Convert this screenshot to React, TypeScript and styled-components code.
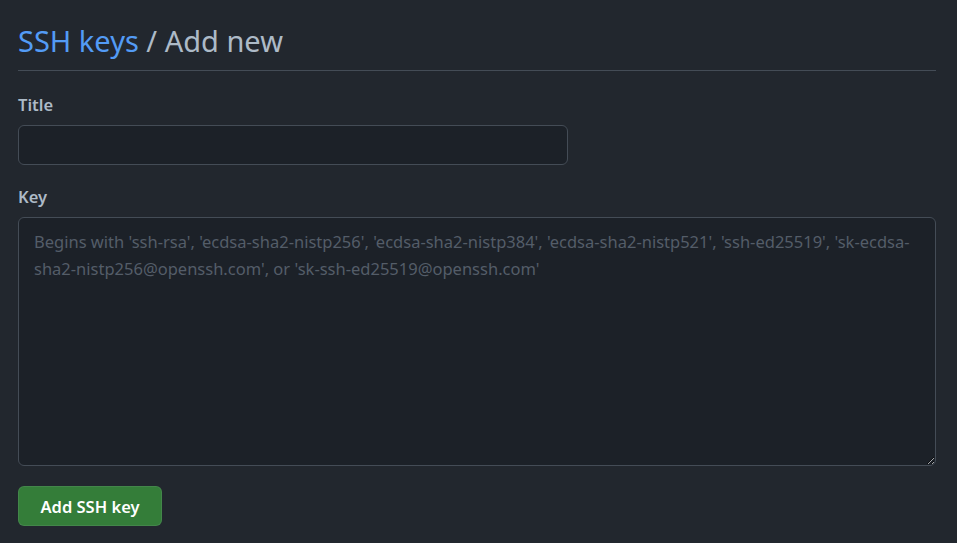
import React from 'react'
import styled, { createGlobalStyle } from 'styled-components'

const GlobalStyle = createGlobalStyle`
    html, body {
        margin:0;
        padding:0;
        background:#22272e;
    }
    body {
        font-family: "Noto Sans", "Open Sans", "Liberation Sans", sans-serif;
        color:#adbac7;
    }
`

const Page = styled.div`
    padding:12px 21px 18px 18px;
    min-height:543px;
    box-sizing:border-box;
    background:#22272e;
`

const Subhead = styled.div`
    display:flex;
    align-items:center;
    height:58px;
    border-bottom:1px solid #444c56;
    margin-bottom:22px;
`

const Heading = styled.h2`
    margin:0;
    font-weight:400;
    font-size:29px;
    line-height:40px;
    color:#adbac7;
`

const Crumb = styled.a`
    color:#539bf5;
    text-decoration:none;
`

const Form = styled.form`
    display:flex;
    flex-direction:column;
`

const Group = styled.div`
    display:flex;
    flex-direction:column;
    margin-bottom:20px;
`

const Label = styled.label`
    font-size:16.5px;
    font-weight:600;
    line-height:24px;
    margin-bottom:8px;
    color:#adbac7;
`

const Field = styled.input`
    box-sizing:border-box;
    width:550px;
    height:40px;
    padding:5px 12px;
    font:inherit;
    font-size:16.5px;
    color:#adbac7;
    background:#1c2128;
    border:1px solid #444c56;
    border-radius:6px;
    outline:none;
`

const KeyArea = styled.textarea`
    box-sizing:border-box;
    width:100%;
    height:249px;
    padding:10px 15px;
    font:inherit;
    font-size:16.5px;
    line-height:27px;
    color:#adbac7;
    background:#1c2128;
    border:1px solid #444c56;
    border-radius:6px;
    outline:none;
    resize:vertical;
    &::placeholder {
        color:#545d68;
    }
`

const SubmitButton = styled.button`
    align-self:flex-start;
    height:40px;
    padding:0 21.5px;
    font:inherit;
    font-size:16.5px;
    font-weight:600;
    color:#fff;
    background:#347d39;
    border:1px solid rgba(205,217,229,0.1);
    border-radius:6px;
    cursor:pointer;
`

const placeholder =
    "Begins with 'ssh-rsa', 'ecdsa-sha2-nistp256', 'ecdsa-sha2-nistp384', 'ecdsa-sha2-nistp521', 'ssh-ed25519', 'sk-ecdsa-sha2-nistp256@openssh.com', or 'sk-ssh-ed25519@openssh.com'"

const App: React.FC = () => {
    return (
        <Page>
            <GlobalStyle />
            <Subhead>
                <Heading>
                    <Crumb href="#">SSH keys</Crumb> / Add new
                </Heading>
            </Subhead>
            <Form onSubmit={e => e.preventDefault()}>
                <Group>
                    <Label htmlFor="key-title">Title</Label>
                    <Field id="key-title" type="text" />
                </Group>
                <Group>
                    <Label htmlFor="key-body">Key</Label>
                    <KeyArea id="key-body" placeholder={placeholder} />
                </Group>
                <SubmitButton type="submit">Add SSH key</SubmitButton>
            </Form>
        </Page>
    )
}

export default App
